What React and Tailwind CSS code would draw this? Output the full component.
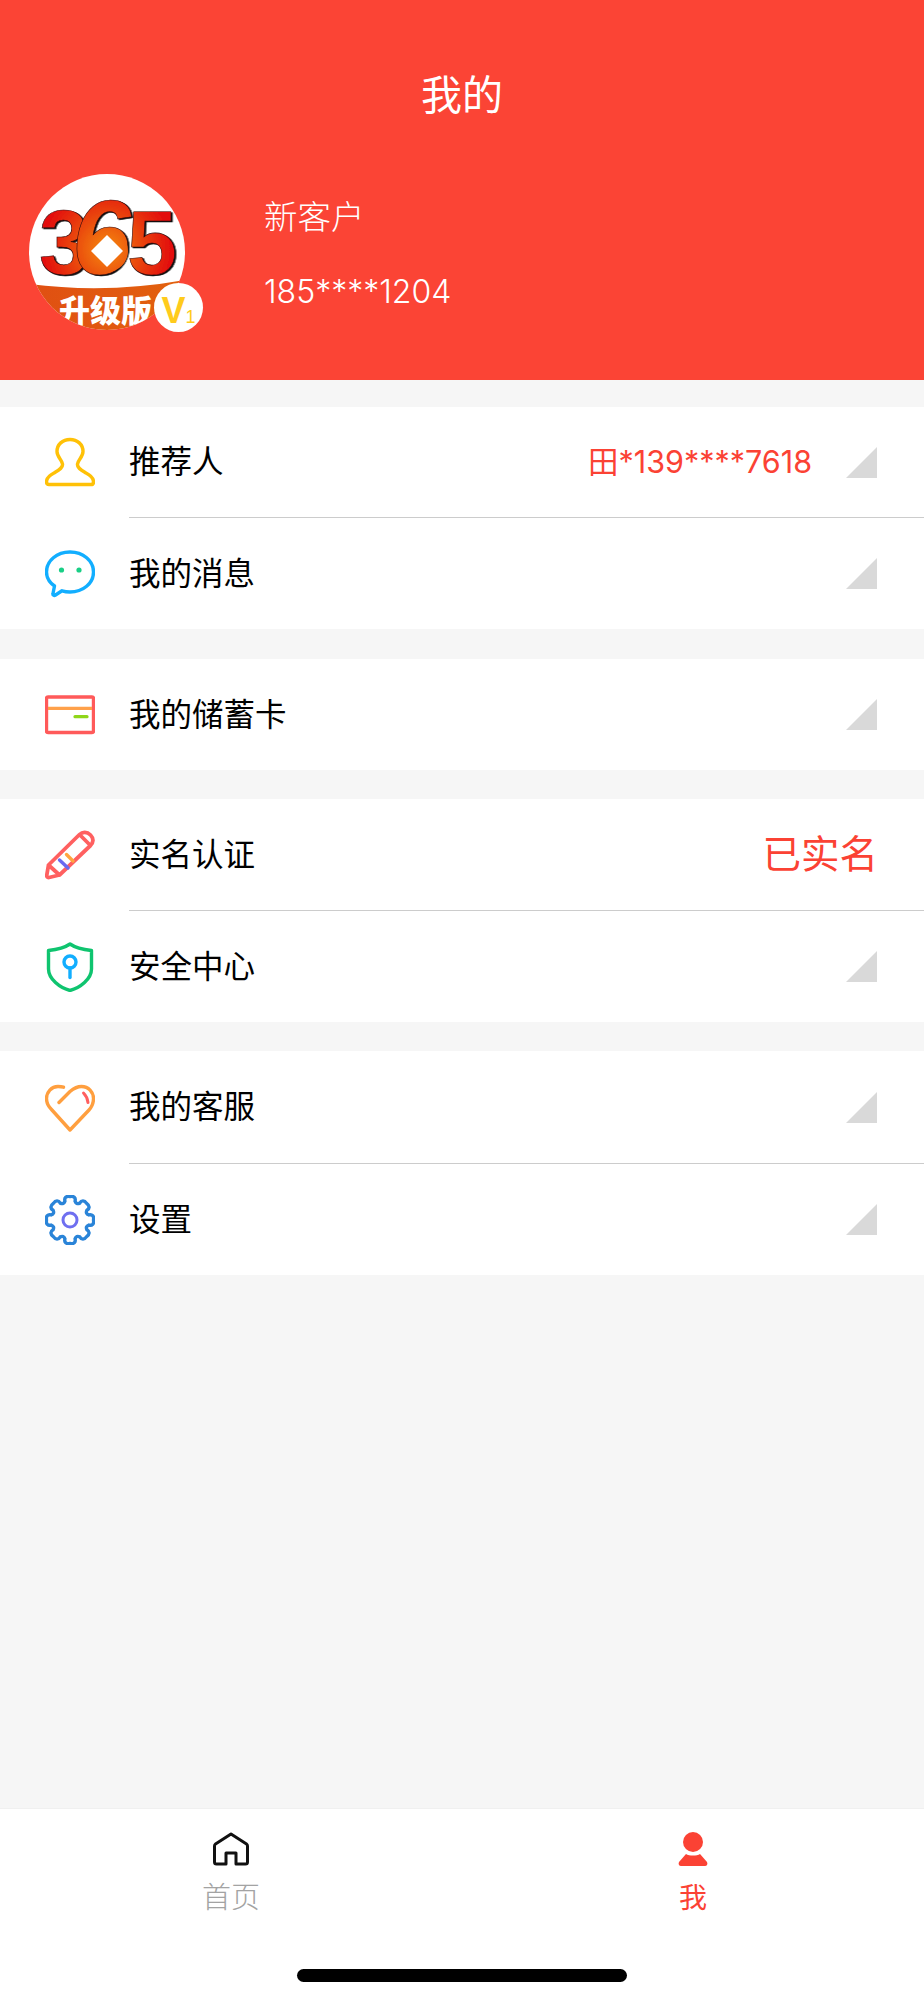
const FONT = '"Inter","Noto Sans CJK SC",sans-serif';

function gearPath() {
  const n = 8;
  const P = (deg, r) => {
    const a = (deg * Math.PI) / 180;
    return [25 + r * Math.cos(a), 25 + r * Math.sin(a)].map((v) => v.toFixed(2)).join(" ");
  };
  let d = "";
  for (let i = 0; i < n; i++) {
    const a = i * 45 - 90;
    const s = i === 0 ? `M${P(a - 15, 19.5)}` : "";
    d += `${s} C${P(a - 15, 23)} ${P(a - 9, 24.5)} ${P(a, 23.5)} C${P(a + 9, 24.5)} ${P(a + 15, 23)} ${P(a + 15, 19.5)} Q${P(a + 22.5, 16.5)} ${P(a + 30, 19.5)}`;
  }
  return d + "Z";
}

const Svg = ({ children, className = "w-[50px] h-[50px]", viewBox = "0 0 50 50" }) => (
  <svg viewBox={viewBox} fill="none" strokeLinecap="round" strokeLinejoin="round" className={className}>
    {children}
  </svg>
);

const UserIcon = () => (
  <Svg className="w-[50px] h-[50px] -mt-[2px]">
    <path stroke="#ffc107" strokeWidth="3.4" d="M25 2.5C32.5 2.5 38 7.5 38 14.5C38 20 33 23 32.5 27C32 31 36 33 41 36C46 38.5 48.5 41 48.5 45C48.5 47 47.5 47.5 46 47.5L4 47.5C2.5 47.5 1.5 47 1.5 45C1.5 41 4 38.5 9 36C14 33 18 31 17.5 27C17 23 12 20 12 14.5C12 7.5 17.5 2.5 25 2.5Z" />
  </Svg>
);
const ChatIcon = () => (
  <Svg>
    <path stroke="#12aeff" strokeWidth="3.4" d="M9.5 37C4.5 33.5 1.5 28.5 1.5 23C1.5 11.5 12 3 25 3C38 3 48.5 11.5 48.5 23C48.5 34.5 38 43 25 43C22 43 19.5 42.6 17 41.8L10.5 46C9 47 7.6 46 8 44.5Z" />
    <circle cx="16.5" cy="21" r="2.6" fill="#19cf86" />
    <circle cx="34" cy="21" r="2.6" fill="#19cf86" />
  </Svg>
);
const CardIcon = () => (
  <Svg>
    <rect x="1.5" y="7" width="47" height="35.5" rx="1.5" stroke="#ff5a5a" strokeWidth="3.4" />
    <path stroke="#ffa14a" strokeWidth="3.2" strokeLinecap="butt" d="M3 18.3H47" />
    <path stroke="#8fd619" strokeWidth="3.2" d="M30 26.7H42" />
  </Svg>
);
const PencilIcon = () => (
  <Svg>
    <path stroke="#ff6060" strokeWidth="3.8" d="M3.5 35L34.5 4.5C37.5 1.5 42 1.5 45.5 5C49 8.5 48.5 12.5 45.5 15.5L14.5 45L4 47.5C2.5 47.8 1.5 46.8 1.8 45ZM3.5 35L14.5 45M35 5L45.5 15.5" />
    <path stroke="#6a6af0" strokeWidth="3.4" d="M14.5 30L23 38" />
    <path stroke="#ffa53f" strokeWidth="3.4" d="M21.5 24.5L28 31" />
  </Svg>
);
const ShieldIcon = () => (
  <Svg>
    <path stroke="#0fc46f" strokeWidth="3.4" d="M25 2C20 5.5 13 7.5 3.5 8.5L3.5 27C3.5 37 15 46 25 48.5C35 46 46.5 37 46.5 27L46.5 8.5C37 7.5 30 5.5 25 2Z" />
    <circle cx="25" cy="20" r="6" stroke="#12aeff" strokeWidth="3.4" />
    <path stroke="#12aeff" strokeWidth="3.4" d="M25 26V35.5" />
  </Svg>
);
const HeartIcon = () => (
  <Svg>
    <path stroke="#ff9f3f" strokeWidth="3.4" d="M18.5 4.2C17 3.7 15.5 3.5 13 3.5C6.5 3.5 1.5 9 1.5 15.5C1.5 20 3.5 23.5 6.5 26.5L25 47L44 27C46.8 24 48.5 20 48.5 15.5C48.5 9 43.5 3.5 36.5 3.5C31 3.5 28 6 25 8.5L14 19.5" />
    <path stroke="#ff5f5f" strokeWidth="3" d="M38.5 10C41 12.5 42.5 15.5 43 19.5" />
  </Svg>
);
const GearIcon = () => (
  <Svg>
    <path stroke="#2a84d8" strokeWidth="3.4" d={gearPath()} />
    <circle cx="25" cy="25" r="7" stroke="#6f6ff0" strokeWidth="3" />
  </Svg>
);

const Arrow = () => (
  <svg viewBox="0 0 31 31" className="w-[31px] h-[31px] block">
    <path d="M31 0V31H0Z" fill="#d9d9d9" />
  </svg>
);

const Row = ({ icon, label, right, divider, height }) => (
  <div className={`flex items-stretch pl-[45px] ${height}`}>
    <div className="w-[50px] flex items-center shrink-0">{icon}</div>
    <div className={`ml-[34px] flex-1 flex items-center pr-[47px] ${divider ? "border-b border-[#cccccc]" : ""}`}>
      <span className="text-[31.5px] text-black flex-1">{label}</span>
      {right}
    </div>
  </div>
);

const Logo = () => (
  <svg viewBox="0 0 156 156" className="w-[156px] h-[156px] block">
    <defs>
      <clipPath id="av"><circle cx="78" cy="78" r="78" /></clipPath>
      <radialGradient id="num" gradientUnits="userSpaceOnUse" cx="78" cy="75" r="64">
        <stop offset="0" stopColor="#f58a0c" />
        <stop offset="0.5" stopColor="#ea4a10" />
        <stop offset="1" stopColor="#e30f0f" />
      </radialGradient>
      <linearGradient id="band" x1="0" y1="0" x2="1" y2="0">
        <stop offset="0" stopColor="#e04f12" />
        <stop offset="1" stopColor="#e2620e" />
      </linearGradient>
      <filter id="sh" x="-10%" y="-10%" width="120%" height="120%">
        <feDropShadow dx="1.5" dy="1" stdDeviation="0.3" floodColor="#111" />
      </filter>
    </defs>
    <g clipPath="url(#av)">
      <rect width="156" height="156" fill="#fff" />
      <path d="M0 110Q78 120 156 106V156H0Z" fill="url(#band)" />
      <text
        y="100"
        fontFamily='"Liberation Sans",sans-serif'
        fontWeight="700"
        fontSize="90"
        fill="url(#num)"
        stroke="#2a0808"
        strokeWidth="0.6"
        filter="url(#sh)"
      >
        <tspan x="10">3</tspan>
        <tspan x="43" fontSize="106" fontStyle="italic">6</tspan>
        <tspan x="98">5</tspan>
      </text>
      <circle cx="78" cy="77" r="21" fill="url(#num)" />
      <path d="M78 61L94 77L78 93L62 77Z" fill="#fff" />
      <text x="30" y="148" fontSize="31" fontWeight="900" fill="#fff" fontFamily='"Noto Sans CJK SC",sans-serif'>升级版</text>
    </g>
  </svg>
);

export default function App() {
  return (
    <div className="w-[924px] h-[2000px] bg-[#f6f6f6] flex flex-col" style={{ fontFamily: FONT }}>
      <header className="h-[380px] bg-[#fb4435] shrink-0 flex flex-col">
        <h1 className="text-center text-white text-[41px] font-normal leading-none pt-[75px]">我的</h1>
        <div className="flex items-start pl-[29px] pt-[58px]">
          <div className="relative w-[156px] h-[156px] shrink-0">
            <Logo />
            <div className="absolute left-[125px] top-[109px] w-[49px] h-[49px] rounded-full bg-white flex items-baseline justify-center text-[#ffcb1c] font-['Liberation_Sans'] leading-none pt-[10px]">
              <span className="text-[36px] font-bold leading-none">V</span>
              <span className="text-[18px] leading-none">1</span>
            </div>
          </div>
          <div className="ml-[79px] text-white font-light leading-none flex flex-col pt-[27px]">
            <span className="text-[33.5px]">新客户</span>
            <span className="text-[32px] mt-[41px]">185****1204</span>
          </div>
        </div>
      </header>

      <main className="flex-1 flex flex-col pt-[27px]">
        <section className="bg-white">
          <Row
            height="h-[111px]"
            icon={<UserIcon />}
            label="推荐人"
            divider
            right={
              <>
                <span className="text-[#fb4234] text-[30.5px] mr-[34px]">田*139****7618</span>
                <Arrow />
              </>
            }
          />
          <Row height="h-[111px]" icon={<ChatIcon />} label="我的消息" right={<Arrow />} />
        </section>
        <section className="bg-white mt-[30px]">
          <Row height="h-[111px]" icon={<CardIcon />} label="我的储蓄卡" right={<Arrow />} />
        </section>
        <section className="bg-white mt-[29px]">
          <Row
            height="h-[112px]"
            icon={<PencilIcon />}
            label="实名认证"
            divider
            right={<span className="text-[#fb4234] text-[38.5px] -mr-[1px]">已实名</span>}
          />
          <Row height="h-[111px]" icon={<ShieldIcon />} label="安全中心" right={<Arrow />} />
        </section>
        <section className="bg-white mt-[29px]">
          <Row height="h-[113px]" icon={<HeartIcon />} label="我的客服" divider right={<Arrow />} />
          <Row height="h-[111px]" icon={<GearIcon />} label="设置" right={<Arrow />} />
        </section>
      </main>

      <footer className="h-[192px] bg-white shrink-0 flex flex-col border-t border-[#f0f0f0]">
        <div className="flex pt-[23px]">
          <div className="flex-1 flex flex-col items-center">
            <Svg className="w-[36px] h-[34px]" viewBox="0 0 36 34">
              <path stroke="#111" strokeWidth="3" d="M18 2L33.5 12C34.2 12.5 34.5 13 34.5 14V30C34.5 31.3 33.8 32 32.5 32H23V21H13V32H3.5C2.2 32 1.5 31.3 1.5 30V14C1.5 13 1.8 12.5 2.5 12Z" />
            </Svg>
            <span className="text-[29px] text-[#a3a3a3] font-light leading-none mt-[17px]">首页</span>
          </div>
          <div className="flex-1 flex flex-col items-center">
            <svg viewBox="0 0 30 34" className="w-[30px] h-[34px]">
              <circle cx="15" cy="10" r="10" fill="#fb4234" />
              <path d="M8 22C11 24 19 24 22 22L29 30C30 32 29 34 27 34H3C1 34 0 32 1 30Z" fill="#fb4234" />
            </svg>
            <span className="text-[28px] text-[#fb4234] leading-none mt-[18px]">我</span>
          </div>
        </div>
        <div className="mt-auto mb-[18px] mx-auto w-[330px] h-[13px] bg-black rounded-full" />
      </footer>
    </div>
  );
}
